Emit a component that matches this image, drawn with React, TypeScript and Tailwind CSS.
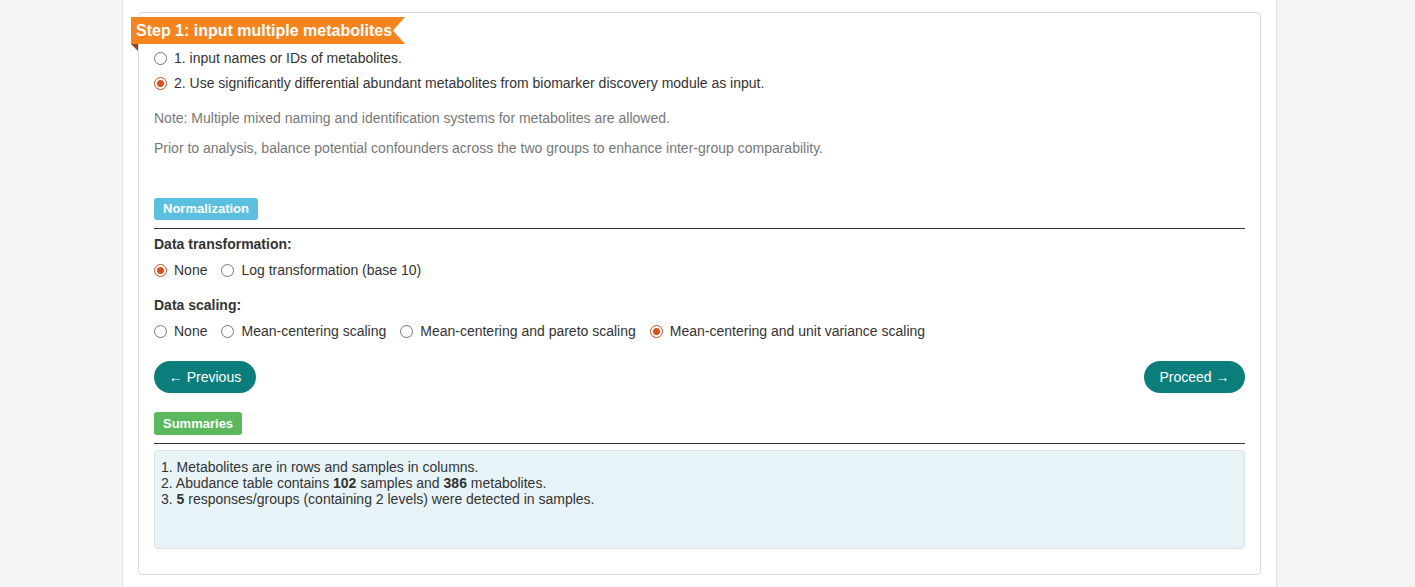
import React from "react";

const font = { fontFamily: '"Liberation Sans", Arial, sans-serif' };

function Radio({ checked, label }: { checked?: boolean; label: string }) {
  return (
    <label className="flex items-center">
      {checked ? (
        <span className="flex h-[13px] w-[13px] items-center justify-center rounded-full border border-[#c94a1c] bg-white">
          <span className="h-[7px] w-[7px] rounded-full bg-[#d4501c]" />
        </span>
      ) : (
        <span className="h-[13px] w-[13px] rounded-full border border-[#767676] bg-white" />
      )}
      <span className="ml-[7px]">{label}</span>
    </label>
  );
}

function Tag({ color, children, h }: { color: string; children: React.ReactNode; h: string }) {
  return (
    <span className={`inline-flex items-center rounded-[3px] px-[9px] text-[13px] font-bold text-white ${color} ${h}`}>
      {children}
    </span>
  );
}

export default function App() {
  return (
    <div className="min-h-[587px] bg-[#f4f4f4] text-[14px] text-[#333]" style={font}>
      <div className="ml-[122px] min-h-[587px] w-[1155px] border-x border-[#e3e3e3] bg-white pt-[12px] pl-[15px] pr-[15px]">
        <div className="rounded-[4px] border border-[#dcdcdc] px-[15px] pt-[4px] pb-[25px]">
          {/* ribbon */}
          <div className="relative ml-[-23px] w-[274px]">
            <div className="flex h-[27px] items-center bg-[#f5841f] pl-[5px] text-[16px] font-bold text-white [clip-path:polygon(0_0,100%_0,calc(100%-12px)_50%,100%_100%,0_100%)]">
              Step 1: input multiple metabolites
            </div>
            <div className="h-[7px] w-[7px] bg-[#8a4a1a] [clip-path:polygon(0_0,100%_0,100%_100%)]" />
          </div>

          <div className="-mt-[5px] flex h-[25px] items-center">
            <Radio label="1. input names or IDs of metabolites." />
          </div>
          <div className="flex h-[25px] items-center">
            <Radio checked label="2. Use significantly differential abundant metabolites from biomarker discovery module as input." />
          </div>

          <p className="mt-[12px] leading-[20px] text-[#777]">
            Note: Multiple mixed naming and identification systems for metabolites are allowed.
          </p>
          <p className="mt-[10px] leading-[20px] text-[#777]">
            Prior to analysis, balance potential confounders across the two groups to enhance inter-group comparability.
          </p>

          <div className="mt-[40px] flex">
            <Tag color="bg-[#5bc0de]" h="h-[22px]">Normalization</Tag>
          </div>
          <div className="mt-[8px] border-t border-[#333]" />

          <div className="mt-[5px] font-bold leading-[20px]">Data transformation:</div>
          <div className="mt-[6px] flex h-[20px] items-center gap-[14px]">
            <Radio checked label="None" />
            <Radio label="Log transformation (base 10)" />
          </div>

          <div className="mt-[15px] font-bold leading-[20px]">Data scaling:</div>
          <div className="mt-[6px] flex h-[20px] items-center gap-[14px]">
            <Radio label="None" />
            <Radio label="Mean-centering scaling" />
            <Radio label="Mean-centering and pareto scaling" />
            <Radio checked label="Mean-centering and unit variance scaling" />
          </div>

          <div className="mt-[20px] flex justify-between">
            <button className="h-[32px] w-[102px] rounded-full bg-[#0b7e7c] text-[14px] text-white">
              ← Previous
            </button>
            <button className="h-[32px] w-[101px] rounded-full bg-[#0b7e7c] text-[14px] text-white">
              Proceed →
            </button>
          </div>

          <div className="mt-[19px] flex">
            <Tag color="bg-[#5cb85c]" h="h-[23px]">Summaries</Tag>
          </div>
          <div className="mt-[8px] border-t border-[#333]" />

          <div className="mt-[6px] h-[99px] rounded-[4px] border border-[#d6e3ea] bg-[#e8f3f8] px-[6px] pt-[8px] leading-[16px]">
            <div>1. Metabolites are in rows and samples in columns.</div>
            <div>
              2. Abudance table contains <b>102</b> samples and <b>386</b> metabolites.
            </div>
            <div>
              3. <b>5</b> responses/groups (containing 2 levels) were detected in samples.
            </div>
          </div>
        </div>
      </div>
    </div>
  );
}
